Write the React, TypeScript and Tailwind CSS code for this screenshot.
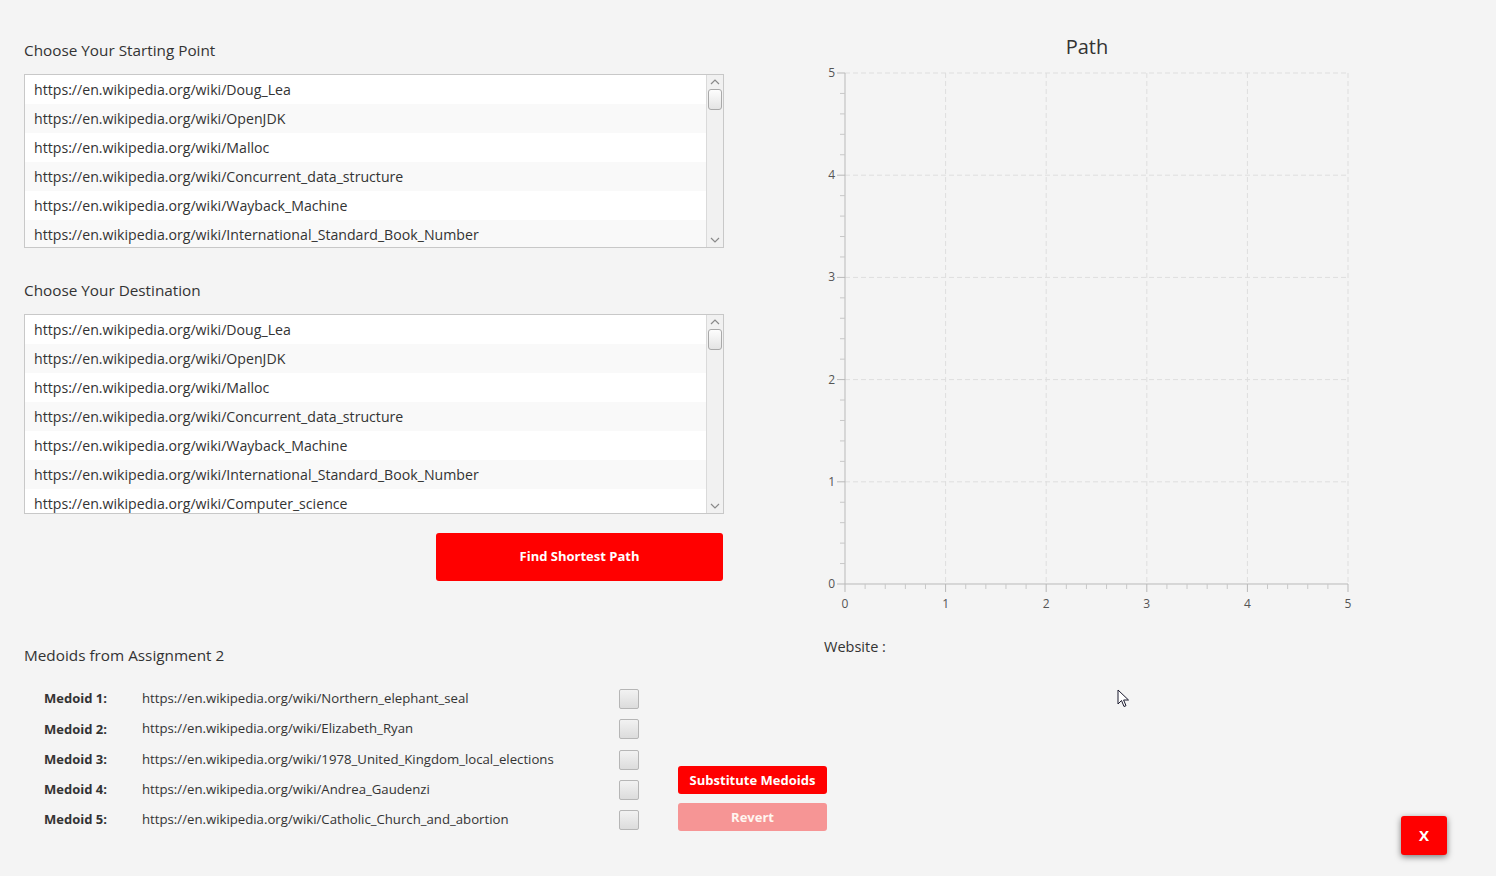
import React from 'react';

const FONT = '"Open Sans", "Noto Sans", "Liberation Sans", sans-serif';

const URLS = [
  'https://en.wikipedia.org/wiki/Doug_Lea',
  'https://en.wikipedia.org/wiki/OpenJDK',
  'https://en.wikipedia.org/wiki/Malloc',
  'https://en.wikipedia.org/wiki/Concurrent_data_structure',
  'https://en.wikipedia.org/wiki/Wayback_Machine',
  'https://en.wikipedia.org/wiki/International_Standard_Book_Number',
  'https://en.wikipedia.org/wiki/Computer_science',
];

const MEDOIDS = [
  'https://en.wikipedia.org/wiki/Northern_elephant_seal',
  'https://en.wikipedia.org/wiki/Elizabeth_Ryan',
  'https://en.wikipedia.org/wiki/1978_United_Kingdom_local_elections',
  'https://en.wikipedia.org/wiki/Andrea_Gaudenzi',
  'https://en.wikipedia.org/wiki/Catholic_Church_and_abortion',
];

function ScrollBar() {
  return (
    <div className="w-[17px] shrink-0 bg-[#f1f1f1] border-l border-[#dadada] flex flex-col items-center">
      <svg width="12" height="14" viewBox="0 0 12 14" className="shrink-0">
        <path d="M2 9 L6 5 L10 9" fill="none" stroke="#8a8a8a" strokeWidth="1.2" />
      </svg>
      <div className="w-[14px] h-[21px] rounded-[3px] border border-[#a9a9a9] bg-gradient-to-b from-[#fdfdfd] to-[#e4e4e4]" />
      <div className="flex-1" />
      <svg width="12" height="14" viewBox="0 0 12 14" className="shrink-0">
        <path d="M2 5 L6 9 L10 5" fill="none" stroke="#8a8a8a" strokeWidth="1.2" />
      </svg>
    </div>
  );
}

function UrlList({ height, rows }: { height: string; rows: number }) {
  return (
    <div className={`flex border border-[#c8c8c8] bg-white overflow-hidden ${height}`}>
      <div className="flex-1 flex flex-col">
        {URLS.slice(0, rows).map((u, i) => (
          <div
            key={u}
            className={`h-[29px] shrink-0 flex items-center pl-[9px] text-[14.15px] text-[#333] ${i % 2 ? 'bg-[#f9f9f9]' : 'bg-white'}`}
          >
            {u}
          </div>
        ))}
      </div>
      <ScrollBar />
    </div>
  );
}

function Chart() {
  const x0 = 45, x1 = 548, yTop = 43, yBot = 554;
  const xs = [0, 1, 2, 3, 4, 5].map(i => x0 + ((x1 - x0) * i) / 5);
  const ys = [0, 1, 2, 3, 4, 5].map(i => yBot - ((yBot - yTop) * i) / 5);
  const minorX: number[] = [];
  const minorY: number[] = [];
  for (let i = 0; i < 25; i++) {
    if (i % 5 !== 0) {
      minorX.push(x0 + ((x1 - x0) * i) / 25);
      minorY.push(yBot - ((yBot - yTop) * i) / 25);
    }
  }
  return (
    <svg width="600" height="590" viewBox="0 0 600 590" style={{ fontFamily: FONT }}>
      <text x="287" y="24" textAnchor="middle" fontSize="20" fill="#333">Path</text>
      {/* grid */}
      {xs.slice(1).map(x => (
        <line key={'gx' + x} x1={x} y1={yTop} x2={x} y2={yBot} stroke="#dedede" strokeDasharray="5 3" />
      ))}
      {ys.slice(1).map(y => (
        <line key={'gy' + y} x1={x0} y1={y} x2={x1} y2={y} stroke="#dedede" strokeDasharray="5 3" />
      ))}
      {/* axes */}
      <line x1={x0} y1={yTop} x2={x0} y2={yBot} stroke="#b9b9b9" />
      <line x1={x0} y1={yBot} x2={x1} y2={yBot} stroke="#b9b9b9" />
      {ys.map(y => (
        <line key={'ty' + y} x1={x0 - 8} y1={y} x2={x0} y2={y} stroke="#b9b9b9" />
      ))}
      {minorY.map(y => (
        <line key={'my' + y} x1={x0 - 5} y1={y} x2={x0} y2={y} stroke="#c8c8c8" />
      ))}
      {xs.map(x => (
        <line key={'tx' + x} x1={x} y1={yBot} x2={x} y2={yBot + 8} stroke="#b9b9b9" />
      ))}
      {minorX.map(x => (
        <line key={'mx' + x} x1={x} y1={yBot} x2={x} y2={yBot + 5} stroke="#c8c8c8" />
      ))}
      {ys.map((y, i) => (
        <text key={'ly' + i} x={x0 - 10} y={y + 4} textAnchor="end" fontSize="12" fill="#555">{i}</text>
      ))}
      {xs.map((x, i) => (
        <text key={'lx' + i} x={x} y={yBot + 24} textAnchor="middle" fontSize="12" fill="#555">{i}</text>
      ))}
    </svg>
  );
}

export default function App() {
  return (
    <div className="relative w-[1496px] h-[876px] bg-[#f4f4f4] text-[#333] flex overflow-hidden" style={{ fontFamily: FONT }}>
      {/* Left column */}
      <div className="w-[776px] shrink-0 pl-[24px] pt-[40px] flex flex-col">
        <div className="w-[700px] flex flex-col">
          <div className="h-[20px] flex items-center text-[15.3px]">Choose Your Starting Point</div>
          <div className="mt-[14px]">
            <UrlList height="h-[174px]" rows={6} />
          </div>
          <div className="mt-[32px] h-[20px] flex items-center text-[15.3px]">Choose Your Destination</div>
          <div className="mt-[14px]">
            <UrlList height="h-[200px]" rows={7} />
          </div>
          <div className="mt-[19px] flex justify-end pr-[1px]">
            <button className="w-[287px] h-[48px] bg-[#ff0000] rounded-[3px] text-white font-bold text-[13px]">
              Find Shortest Path
            </button>
          </div>
        </div>

        <div className="mt-[64px] h-[20px] flex items-center text-[15.3px]">Medoids from Assignment 2</div>

        <div className="mt-[19px] flex items-end">
          <div className="flex flex-col pl-[20px]">
            {MEDOIDS.map((m, i) => (
              <div key={m} className="h-[30.25px] flex items-center">
                <div className="w-[98px] font-bold text-[13px]">Medoid {i + 1}:</div>
                <div className="w-[477px] text-[13.2px]">{m}</div>
                <div className="w-[20px] h-[20px] rounded-[2px] border border-[#b6b6b6] bg-gradient-to-b from-[#f2f2f2] to-[#dcdcdc]" />
              </div>
            ))}
          </div>
          <div className="ml-[39px] mb-[4px] flex flex-col gap-[9px]">
            <button className="w-[149px] h-[28px] bg-[#ff0000] rounded-[3px] text-white font-bold text-[13px]">
              Substitute Medoids
            </button>
            <button className="w-[149px] h-[28px] bg-[#f69595] rounded-[3px] text-[#fff6f0] font-bold text-[13px]">
              Revert
            </button>
          </div>
        </div>
      </div>

      {/* Right column */}
      <div className="w-[672px] shrink-0 flex flex-col pt-[30px] pl-[24px]">
        <Chart />
        <div className="mt-[16px] ml-[24px] text-[14.5px]">Website :</div>
        <div className="flex-1" />
        <div className="flex justify-end mb-[21px] mr-[1px]">
          <button className="w-[46px] h-[39px] bg-[#ff0000] rounded-[3px] text-white font-bold text-[15px] shadow-[0_2px_6px_rgba(0,0,0,0.5)]">
            X
          </button>
        </div>
      </div>

      {/* mouse cursor */}
      <svg className="absolute left-[1117px] top-[689px]" width="14" height="20" viewBox="0 0 14 20">
        <path d="M1 1 L1 15 L4.5 11.5 L7 17.5 L9 16.7 L6.6 11 L11.5 11 Z" fill="#fff" stroke="#1a1a2e" strokeWidth="1" strokeLinejoin="round" />
      </svg>
    </div>
  );
}
